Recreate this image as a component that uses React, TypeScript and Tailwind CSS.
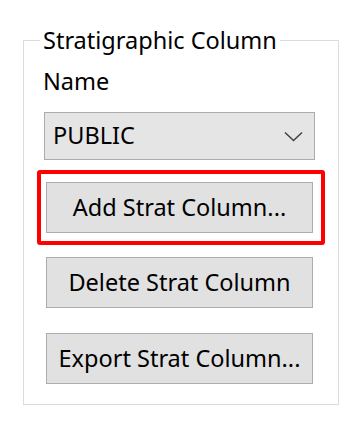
import React from 'react';

const font = { fontFamily: '"Noto Sans", "Open Sans", sans-serif' };

const WinButton: React.FC<{ label: string }> = ({ label }) => (
  <button className="flex h-[51px] w-[267px] items-center justify-center border border-[#adadad] bg-[#e1e1e1] text-[23.5px] leading-none text-black">
    {label}
  </button>
);

export default function App() {
  return (
    <div className="h-[435px] w-[354px] bg-white pl-[23px] pt-[24px]" style={font}>
      <fieldset className="w-[316px] border border-[#dcdcdc] pb-[20px]">
        <legend className="ml-[16px] px-[3px] text-[23.5px] leading-[32px] text-black">
          Stratigraphic Column
        </legend>
        <div className="mt-[9px] ml-[19px] text-[23.5px] leading-[32px] text-black">Name</div>
        <div className="mt-[15px] ml-[20px] flex h-[48px] w-[271px] items-center justify-between border border-[#acacac] bg-[#e5e5e5] pl-[8px] pr-[11px] text-[23.5px] text-black">
          <span>PUBLIC</span>
          <svg width="19" height="11" viewBox="0 0 19 11" fill="none">
            <polyline points="1,1.5 9.5,9.5 18,1.5" stroke="#444444" strokeWidth="1.6" />
          </svg>
        </div>
        <div className="mt-[10px] ml-[13px] w-[288px] rounded-[3px] border-4 border-[#ff0000] py-[8px] pl-[5px]">
          <WinButton label="Add Strat Column..." />
        </div>
        <div className="mt-[12px] ml-[22px]">
          <WinButton label="Delete Strat Column" />
        </div>
        <div className="mt-[25px] ml-[22px]">
          <WinButton label="Export Strat Column..." />
        </div>
      </fieldset>
    </div>
  );
}
